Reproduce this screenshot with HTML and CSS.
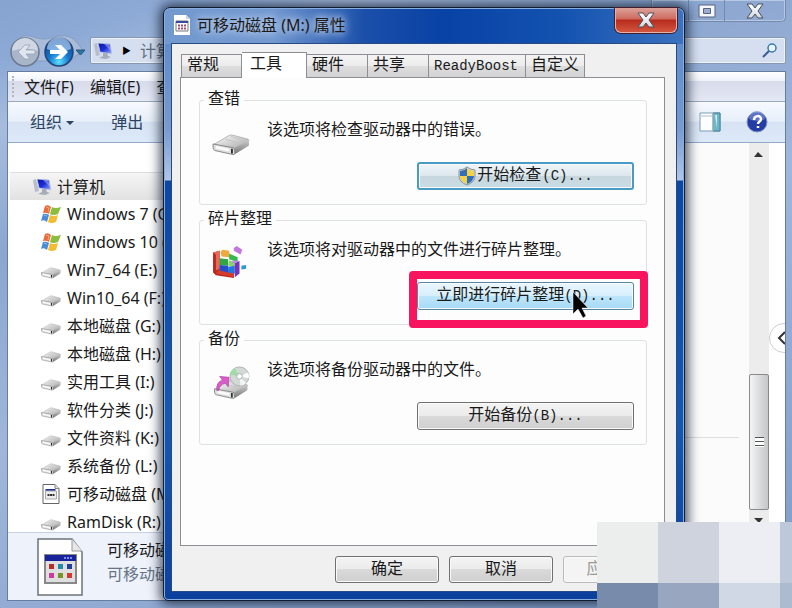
FILE: index.html
```
<!DOCTYPE html>
<html lang="zh-CN">
<head>
<meta charset="utf-8">
<title>可移动磁盘 (M:) 属性</title>
<link rel="stylesheet" href="styles.css">
</head>
<body>
<svg class="defs" aria-hidden="true">
  <defs>
    <linearGradient id="metal" x1="0" y1="0" x2="1" y2="1"><stop offset="0" stop-color="#fff"/><stop offset="1" stop-color="#9c9e9c"/></linearGradient>
    <linearGradient id="side" x1="0" y1="0" x2="0" y2="1"><stop offset="0" stop-color="#c9c9c9"/><stop offset="1" stop-color="#777"/></linearGradient>
    <linearGradient id="screen" x1="0" y1="0" x2="1" y2="1"><stop offset="0" stop-color="#0812a0"/><stop offset=".5" stop-color="#1c30d8"/><stop offset="1" stop-color="#9fb4ff"/></linearGradient>
    <radialGradient id="forward" cx=".5" cy=".85" r=".8"><stop offset="0" stop-color="#5fe0ff"/><stop offset=".45" stop-color="#1679cf"/><stop offset="1" stop-color="#103f8e"/></radialGradient>
    <linearGradient id="cross" x1="0" y1="0" x2="0" y2="1"><stop offset="0" stop-color="#fff"/><stop offset="1" stop-color="#d5d8de"/></linearGradient>
    <symbol id="drive" viewBox="0 0 40 24">
      <path d="M1 12 18 2Q20 1 23 2L38 6Q40 7 38 9L24 19 4 16Q1 15 1 12Z" fill="url(#metal)" stroke="#999" stroke-width=".7"/>
      <path d="M1 11 22 15Q24 15 24 18V21Q24 23 21 22L3 18Q1 17 1 15Z" fill="#dedede" stroke="#777" stroke-width=".9"/>
      <path d="M24 15 39 7V12Q39 13 37 14L24 22Z" fill="url(#side)"/>
      <path d="M4 13 18 16V19L4 16Z" fill="#fafafa"/><path d="M20 16h2v5h-2z" fill="#263526"/><path d="m14 6 12 3M20 3l12 4" stroke="#c5c5c5"/>
    </symbol>
    <symbol id="flag" viewBox="0 0 20 18">
      <path d="M4 1Q7-1 10 2L8 9Q5 7 2 8Z" fill="#e76c3a"/><path d="M11 2Q14 4 20 2L17 9Q12 11 9 9Z" fill="#8cbd3c"/>
      <path d="M2 9Q5 8 8 10L6 17Q3 14 0 16Z" fill="#4a8bd6"/><path d="M9 10Q13 12 17 10L15 17Q10 19 7 17Z" fill="#f3bd31"/>
      <path d="m5 2 3 1-1 4M3 10l3 1" stroke="#fff" stroke-opacity=".4" fill="none"/>
    </symbol>
    <symbol id="pc" viewBox="0 0 20 16">
      <path d="M1 1 4 0 7 12 3 13Z" fill="#b7bdc9"/><path d="M5 0 17 1 19 11 7 9Z" fill="url(#screen)" stroke="#c3cbe2" stroke-width=".8"/><path d="M10 10h4l1 3 3 1-5 2-7-1 4-2Z" fill="#a7adb8"/><path d="m11 1 5 0 2 7Z" fill="#fff" opacity=".35"/>
    </symbol>
    <symbol id="sheet" viewBox="0 0 46 58">
      <path d="M1 1h34l10 13v43H1Z" fill="#fefefe" stroke="#6e7178" stroke-width="1.5"/><path d="M35 1v12h10" fill="#e7e7e7" stroke="#999"/>
      <path d="M8 17h31v28H8Z" fill="#dfdfdf" stroke="#888" stroke-width="2"/><path d="M8 17h31v6H8Z" fill="#182399"/>
      <path d="M27 20h8" stroke="#7b8df1" stroke-width="2" stroke-dasharray="2 1"/>
      <g><path d="M12 26h5v5h-5z" fill="#b72e24"/><path d="M21 26h5v5h-5z" fill="#218ba5"/><path d="M30 26h5v5h-5z" fill="#233f9e"/><path d="M12 35h5v5h-5z" fill="#cc3b9f"/><path d="M21 35h5v5h-5z" fill="#759524"/><path d="M30 35h5v5h-5z" fill="#cf3b33"/></g>
    </symbol>
    <symbol id="titlesheet" viewBox="0 0 16 20">
      <path d="M0 0h12l4 4v16H0Z" fill="#fff"/><path d="M12 0v4h4" fill="#ccd3df"/><path d="M2 6h12v10H2Z" fill="#fff" stroke="#777"/><path d="M2 6h12v2H2Z" fill="#3949a0"/><path d="M4 10.500h9M4 13.500h9" stroke="#a34b70" stroke-width="2" stroke-dasharray="2 1"/>
    </symbol>
    <symbol id="smallsheet" viewBox="0 0 17 20">
      <path d="M.5.5h12l4 4v15H.5Z" fill="#fff" stroke="#666"/><path d="M12.500.5v4h4" fill="#ddd" stroke="#888"/><path d="M3 5h10v2H3Z" fill="#202f96"/><path d="M3 7h11v8H3Z" fill="#eee" stroke="#aaa"/><path d="M5 11h7" stroke="#333" stroke-width="2" stroke-dasharray="2 .5"/>
    </symbol>
    <symbol id="x" viewBox="0 0 18 16"><path d="M1 1h5l3 4 3-4h5l-5 7 5 7h-5l-3-4-3 4H1l5-7Z" fill="url(#cross)" stroke="#4b4f5d"/></symbol>
  </defs>
</svg>

<div class="explorer">
  <header class="caption">
    <span class="captionbox"><span class="minimize"></span>
      <button class="max" aria-label="最大化"><svg width="18" height="14"><path d="M1 1h16v12H1Z" fill="#f4f7fc" stroke="#56647f"/><path d="M5.500 4.500h7v5h-7z" fill="#9baed0" stroke="#56647f"/></svg></button>
      <button class="winclose" aria-label="关闭窗口"><svg width="18" height="16"><use href="#x"/></svg></button></span>
  </header>
  <nav class="navrow">
    <svg class="arrows" width="78" height="36" viewBox="0 0 78 36">
      <path d="M15 2C27 1 28 5 37 5S47 1 59 2c8 1 12 8 16 13 2 5-6 4-11 12H10Z" fill="#a9bddb" stroke="#879cbd"/>
      <circle cx="18" cy="18" r="14" fill="#a9b6c9" stroke="#6c7890" stroke-width="1.500"/><path d="M5 17a13 13 0 0 1 26 0Q18 12 5 17Z" fill="#d0d7e2"/><path d="M28 16v4h-9l4 5h-5l-7-7 7-7h5l-4 5Z" fill="#dfe5ed" stroke="#929eb1" stroke-width=".7"/>
      <circle cx="52" cy="18" r="14" fill="url(#forward)" stroke="#244576" stroke-width="1.500"/><path d="M40 15a12 12 0 0 1 24 0Q52 21 40 15Z" fill="#bcd8fa" opacity=".65"/><path d="M43 16v4h10l-5 5h6l7-7-7-7h-6l5 5Z" fill="#fff"/>
      <path d="M69 16h9l-4.500 5Z" fill="#2b78a5" stroke="#205578"/>
    </svg>
    <div class="address"><svg width="20" height="16"><use href="#pc"/></svg><span class="crumb">▶</span><span>计算机</span>
      <svg class="search" width="16" height="16"><circle cx="10" cy="5" r="4" fill="#e8f5ff" stroke="#397aad" stroke-width="1.500"/><path d="m7 8-6 6" stroke="#385c96" stroke-width="2"/></svg></div>
  </nav>
  <main class="client">
    <div class="menubar"><a href="#">文件(F)</a><a href="#">编辑(E)</a><a href="#">查看(V)</a></div>
    <div class="toolbar"><button>组织 <i></i></button><button>弹出</button><span class="tools">
      <svg width="22" height="20"><path d="M1 1h20v18H1Z" fill="#fff" stroke="#7b9db4"/><path d="M14 1h7v18h-7z" fill="#6db7ca" stroke="#477f92"/><path d="M2 4h12M14 1v18" stroke="#a9bdca"/><path d="M16 3h2v13z" fill="#d0eff6"/></svg>
      <svg width="22" height="22"><circle cx="11" cy="11" r="10" fill="#243ca5" stroke="#8293bd"/><path d="M3 8a8 8 0 0 1 16 0Q11 12 3 8Z" fill="#8398e0" opacity=".6"/><path d="M8 9c0-5 7-5 7-1 0 3-3 2-3 5M12 15v2" fill="none" stroke="#fff" stroke-width="2.500"/></svg></span></div>
    <div class="browse">
      <ul class="tree">
        <li class="root"><svg width="20" height="16"><use href="#pc"/></svg>计算机</li>
        <li><svg width="20" height="18"><use href="#flag"/></svg>Windows 7 (C:)</li>
        <li><svg width="20" height="18"><use href="#flag"/></svg>Windows 10 (D:)</li>
        <li><svg class="disk" width="20" height="12"><use href="#drive"/></svg>Win7_64 (E:)</li>
        <li><svg class="disk" width="20" height="12"><use href="#drive"/></svg>Win10_64 (F:)</li>
        <li><svg class="disk" width="20" height="12"><use href="#drive"/></svg>本地磁盘 (G:)</li>
        <li><svg class="disk" width="20" height="12"><use href="#drive"/></svg>本地磁盘 (H:)</li>
        <li><svg class="disk" width="20" height="12"><use href="#drive"/></svg>实用工具 (I:)</li>
        <li><svg class="disk" width="20" height="12"><use href="#drive"/></svg>软件分类 (J:)</li>
        <li><svg class="disk" width="20" height="12"><use href="#drive"/></svg>文件资料 (K:)</li>
        <li><svg class="disk" width="20" height="12"><use href="#drive"/></svg>系统备份 (L:)</li>
        <li><svg width="20" height="20"><use href="#smallsheet"/></svg>可移动磁盘 (M:)</li>
        <li><svg class="disk" width="20" height="12"><use href="#drive"/></svg>RamDisk (R:)</li>
      </ul>
      <div class="files"><hr></div>
      <div class="scroll"><svg width="10" height="6"><path d="m0 5 4-5 5 5Z" fill="#333"/></svg><div class="thumb"><i></i></div><svg width="10" height="6"><path d="M0 0h9L5 5Z" fill="#333"/></svg></div>
      <div class="gutter"><button aria-label="展开"><svg width="9" height="14"><path d="M8 1 2 7l6 6" fill="none" stroke="#333" stroke-width="2"/></svg></button></div>
    </div>
    <footer class="details"><svg width="46" height="58"><use href="#sheet"/></svg><div><p>可移动磁盘 (M:)</p><p class="kind">可移动磁盘</p></div></footer>
  </main>
</div>

<section class="dialog" role="dialog" aria-labelledby="title">
  <header class="titlebar"><svg width="16" height="20"><use href="#titlesheet"/></svg><h1 id="title">可移动磁盘 (M:) 属性</h1><button class="close" aria-label="关闭"><svg width="18" height="16"><use href="#x"/></svg></button></header>
  <div class="sheet">
    <div class="tabs" role="tablist">
      <button role="tab">常规</button><button role="tab" class="active" aria-selected="true">工具</button><button role="tab">硬件</button><button role="tab">共享</button><button role="tab" class="boost">ReadyBoost</button><button role="tab" class="custom">自定义</button>
    </div>
    <div class="panel">
      <fieldset><legend>查错</legend>
        <svg class="pic" width="38" height="34" viewBox="0 0 40 36"><use href="#drive" y="8" width="40" height="24"/></svg>
        <div class="task"><p>该选项将检查驱动器中的错误。</p>
          <button class="action default"><svg width="18" height="20"><path d="M9 1Q13 4 17 4v6q0 6-8 9-8-3-8-9V4q4 0 8-3Z" fill="#d9dde2" stroke="#8790a0"/><path d="M9 2v8H2V5q4 0 7-3Z" fill="#306fb8"/><path d="M9 2q3 3 7 3v5H9Z" fill="#f3d24a"/><path d="M2 10h7v8q-7-3-7-8Z" fill="#f3d24a"/><path d="M9 10h7q0 5-7 8Z" fill="#306fb8"/></svg>开始检查<span class="latin">(C)...</span></button></div>
      </fieldset>
      <fieldset><legend>碎片整理</legend>
        <svg class="pic" width="38" height="34" viewBox="0 0 40 36">
          <path d="m1 7 7-2v19l15 3v7L4 31 1 28Z" fill="#b92721"/><path d="m1 7 7-2v19l-4 2V9Z" fill="#e66a56"/><path d="m4 29 19 4v-6L8 24Z" fill="#d33c2b"/>
          <path d="m9 6 2-2 7 1v7l-8-1Z" fill="#f0a83c"/><path d="m8 13 9 1v7l-9-1Z" fill="#30a644"/><path d="m8 20 9 1v7l-9-2Z" fill="#244eca"/>
          <path d="m18 8 9 4v5l-9-3Z" fill="#36b84c"/><path d="m18 15 6 2v5l-7-1Z" fill="#8dd36b"/><path d="m17 22 7-1v8l-7-1Z" fill="#2477dd"/>
          <path d="m24 18 5-2v13l-5 4Z" fill="#7534bc"/><path d="m20 17 5-2 4 1-5 2Z" fill="#b886eb"/><path d="m23 2 3-2 6 4-2 5-7-4Z" fill="#c477dc"/><path d="m31 21 5-1v4l-5 1Z" fill="#2f96dc"/>
        </svg>
        <div class="task"><p>该选项将对驱动器中的文件进行碎片整理。</p>
          <div class="marked"><button class="action hot">立即进行碎片整理<span class="latin">(D)...</span></button><span class="marker"></span>
          <svg class="pointer" width="16" height="28"><path d="M1 1v22l5-5 5 9 3-2-4-8h6Z" fill="#000" stroke="#fff" stroke-width=".5"/></svg></div></div>
      </fieldset>
      <fieldset><legend>备份</legend>
        <svg class="pic" width="38" height="34" viewBox="0 0 40 36">
          <use href="#drive" y="14" width="40" height="22"/><circle cx="29" cy="11" r="10" fill="#d3dad6" stroke="#abb1ae"/><path d="M29 11 24 2a10 10 0 0 0-5 7Z" fill="#9fdca7"/><path d="m29 11 9-4a10 10 0 0 1 1 6Z" fill="#fff"/><path d="m29 11 1 10a10 10 0 0 0 6-3Z" fill="#f4f6f4"/><circle cx="29" cy="11" r="3" fill="#fff" stroke="#aaa"/>
          <path d="M7 26H5q-1-9 6-11L8 11l10 1-1 10-3-4q-6 1-7 8Z" fill="#dc5bcb" stroke="#a8429e" stroke-width=".7"/>
        </svg>
        <div class="task"><p>该选项将备份驱动器中的文件。</p>
          <button class="action">开始备份<span class="latin">(B)...</span></button></div>
      </fieldset>
    </div>
    <div class="buttons"><button>确定</button><button>取消</button><button disabled>应用<span class="latin">(A)</span></button></div>
  </div>
</section>

<div class="mosaic" aria-hidden="true"><i></i><i></i><i></i><i></i><i></i><i></i><i></i><i></i></div>
</body>
</html>
```

FILE: styles.css
```
* { box-sizing: border-box; }
body {
  margin: 0;
  height: 100vh;
  overflow: hidden;
  position: relative;
  font: 16px/20px "Noto Sans", "Noto Sans CJK SC", sans-serif;
  color: #1a1a1a;
}
button { font: inherit; color: inherit; padding: 0; margin: 0; border: 0; background: none; }
svg { flex: none; }
p, h1, ul { margin: 0; padding: 0; }
.defs { position: absolute; width: 0; height: 0; }

/* Explorer window */
.explorer {
  height: 100%;
  display: flex;
  flex-direction: column;
  padding: 0 6px 7px 7px;
  background: linear-gradient(160deg, #86a3d0 0, #8daad6 60px, #a7bcdd 120px, #8ba6d0 240px, #a0b6da 420px, #7f9bc8 100%);
}
.caption { height: 22px; display: flex; justify-content: flex-end; }
.captionbox { display: flex; border: 1px solid #7489ad; border-top: 0; border-radius: 0 0 5px 5px; box-shadow: inset 0 0 0 1px #b7c8e3; }
.minimize { width: 36px; }
.max { width: 36px; border-left: 1px solid #7489ad; }
.winclose { width: 61px; border-left: 1px solid #7489ad; }
.max svg, .winclose svg { display: block; margin: 0 auto; }
.navrow { height: 49px; padding-top: 11px; display: flex; gap: 5px; }
.arrows { margin-top: 1px; }
.address {
  flex: 1;
  height: 27px;
  margin-top: 4px;
  display: flex;
  align-items: center;
  gap: 9px;
  padding: 0 7px 0 2px;
  color: #606b7c;
  background: #d5dff0;
  border: 1px solid #8798b5;
  box-shadow: inset 0 0 0 1px #edf3fb;
  border-radius: 2px;
}
.crumb { font-size: 9px; color: #000; }
.search { margin-left: auto; }
.client { flex: 1; min-height: 0; display: flex; flex-direction: column; border: 1px solid #667d9f; background: #fff; }
.menubar {
  height: 30px;
  display: flex;
  align-items: center;
  gap: 16px;
  padding-left: 16px;
  border-bottom: 1px solid #9aa8c0;
  background: linear-gradient(#fff 0, #f0f3fa 30%, #d7dbeb 31%, #e4e8f4 100%);
  position: relative;
}
.menubar::before { content: ""; position: absolute; left: 4px; top: 4px; bottom: 4px; border-left: 2px dotted #aeb6c6; }
.menubar a { color: inherit; text-decoration: none; }
.toolbar {
  height: 41px;
  display: flex;
  align-items: center;
  gap: 37px;
  padding: 0 17px 0 22px;
  color: #2c4261;
  border-bottom: 1px solid #93a9c8;
  background: linear-gradient(#f7faff 0, #e7eff9 48%, #d7e3f4 50%, #dce9f8 100%);
}
.toolbar i { display: inline-block; border: 4px solid transparent; border-top-color: #2c4261; border-bottom: 0; margin-bottom: 3px; }
.tools { margin-left: auto; display: flex; align-items: center; gap: 25px; }
.browse { flex: 1; min-height: 0; display: flex; }
.tree { width: 200px; padding-top: 29px; list-style: none; overflow: hidden; }
.tree li { height: 28px; display: flex; align-items: center; gap: 6px; padding-left: 33px; white-space: nowrap; }
.tree .root { margin-left: 2px; padding-left: 22px; gap: 5px; background: linear-gradient(#f5f5f5, #e2e2e2); border-top: 1px solid #ddd; }
.tree .disk { margin-top: 6px; }
.files { flex: 1; background: #fbfbfc; display: flex; align-items: center; }
.files hr { flex: 1; margin: 200px 10px 0 0; border: 0; border-top: 1px solid #ddd; }
.scroll { width: 20px; background: #ececec; display: flex; flex-direction: column; align-items: center; padding: 9px 0 8px; }
.thumb {
  width: 20px;
  flex: 0 0 136px;
  margin: auto 0 8px;
  display: grid;
  place-items: center;
  border: 1px solid #8a8a8a;
  border-radius: 2px;
  background: linear-gradient(90deg, #f4f4f4, #dedfe0 45%, #c5c6c8);
}
.thumb i { width: 9px; height: 10px; background: repeating-linear-gradient(#555 0 1px, #fff 1px 4px); }
.gutter { width: 16px; display: flex; align-items: center; overflow: hidden; }
.gutter button { flex: none; width: 30px; height: 30px; padding-left: 7px; display: flex; align-items: center; border: 1px solid #ccc; border-radius: 50%; }
.details { height: 68px; display: flex; gap: 24px; padding: 5px 29px; border-top: 1px solid #c6d2e4; background: #eef2fb; }
.details p { line-height: 24px; }
.details .kind { color: #687486; }

/* Properties dialog */
.dialog {
  position: absolute;
  inset: 7px 107px 7px 163px;
  display: flex;
  flex-direction: column;
  padding: 0 7px 8px;
  border: 1px solid #101c30;
  border-radius: 7px 7px 5px 5px;
  background: linear-gradient(90deg, #739acf 0, #7298d0 110px, #1b4fa9 200px, #0842a5 280px, #1453b0 400px, #3c72bf 100%) 0 0 / 100% 36px no-repeat,
    linear-gradient(#5588ca 0, #7799ce 120px, #b0c5e5 172px, #0b48a3 173px, #1558b0 70%, #0b419d 100%);
  box-shadow: inset 0 0 0 1px #8aaddd, 0 0 12px 3px rgba(10, 20, 40, .75);
}
.titlebar { height: 35px; display: flex; gap: 7px; padding: 7px 0 0 3px; }
.titlebar h1 {
  font-size: 16px;
  line-height: 20px;
  font-weight: 400;
  text-shadow: 0 0 6px #b5cbea, 0 0 10px #b5cbea, 0 0 12px #a2bce2;
}
.close {
  margin: -7px 0 0 auto;
  width: 62px;
  height: 25px;
  display: grid;
  place-items: center;
  border: 1px solid #e4b3ae;
  border-top: 0;
  border-radius: 0 0 6px 6px;
  background: linear-gradient(#dca29a 0, #ce6a5d 46%, #b82a1c 50%, #d3563e 100%);
  box-shadow: 0 0 0 1px #471d29;
}
.sheet, .dialog button { font-family: "Liberation Mono", "Noto Sans CJK SC", monospace; }
.sheet { flex: 1; min-height: 0; display: flex; flex-direction: column; padding: 9px 11px 8px 8px; background: #f0f0f0; border: 1px solid #284a82; }
.tabs { height: 24px; display: flex; align-items: flex-end; padding-left: 1px; position: relative; }
.tabs button {
  width: 61px;
  height: 23px;
  padding-left: 5px;
  text-align: left;
  border: 1px solid #8c8e94;
  border-left-width: 0;
  border-bottom: 0;
  background: linear-gradient(#f4f4f4, #ececec 48%, #dedede 50%, #d2d2d2);
}
.tabs button:first-child { border-left-width: 1px; }
.tabs .active { width: 65px; height: 26px; margin-bottom: -1px; padding: 0 0 2px 8px; background: #fff; }
.tabs .boost { width: 97px; padding-left: 5px; font-size: 14px; }
.tabs .custom { width: 59px; }
.panel { flex: 1; display: flex; flex-direction: column; gap: 5px; padding: 12px 17px 0 18px; border: 1px solid #8c8e94; background: #fdfdfd; }
fieldset { margin: 0; height: 115px; min-width: 0; display: flex; gap: 20px; padding: 0 12px; border: 1px solid #dce2e3; border-radius: 3px; }
legend { margin-left: -8px; padding: 0 4px; line-height: 20px; height: 20px; }
.pic { margin-top: 16px; }
.task { flex: 1; display: flex; flex-direction: column; white-space: nowrap; }
.task p { margin: 11px -3px 21px; }
.action, .buttons button {
  height: 28px;
  border: 1px solid #707070;
  border-radius: 3px;
  background: linear-gradient(#f4f4f4, #ebebeb 48%, #dadada 50%, #cfcfcf);
  box-shadow: inset 0 0 0 1px #fafafa;
}
.action { align-self: flex-end; width: 217px; display: flex; align-items: center; justify-content: center; }
.latin { font-size: 14px; }
.default { gap: 1px; border: 2px solid #4a9ac6; background: linear-gradient(#eef5f8, #dde8ee 48%, #c8d7de 50%, #c9dce5); }
.hot { border-color: #5586a3; background: linear-gradient(#e9f6fd, #d8effc 48%, #bde6fd 50%, #a7d9f5); }
.marked { position: relative; align-self: flex-end; }
.marker { position: absolute; inset: -11px -14px -18px -8px; border: 8px solid #f9145f; border-radius: 4px; }
.pointer { position: absolute; left: 155px; top: 9px; }
.buttons { display: flex; justify-content: flex-end; gap: 10px; padding-top: 10px; margin-right: -2px; }
.buttons button { width: 104px; height: 27px; }
.buttons button:disabled { color: #999; border-color: #bbb; background: #f4f4f4; }

/* Pixelated patch in the corner */
.mosaic { position: absolute; right: 0; bottom: 0; display: grid; grid-template: 61px 25px / 61px 61px 61px 12px; background: #ebeeed; }
.mosaic i:nth-child(2) { background: #ced3de; }
.mosaic i:nth-child(3) { background: #eceef4; }
.mosaic i:nth-child(4) { background: #bdc9db; }
.mosaic i:nth-child(5) { background: #788baa; }
.mosaic i:nth-child(6) { background: #98a6c0; }
.mosaic i:nth-child(7) { background: #d0d8e5; }
.mosaic i:nth-child(8) { background: #adbbd1; }
```
